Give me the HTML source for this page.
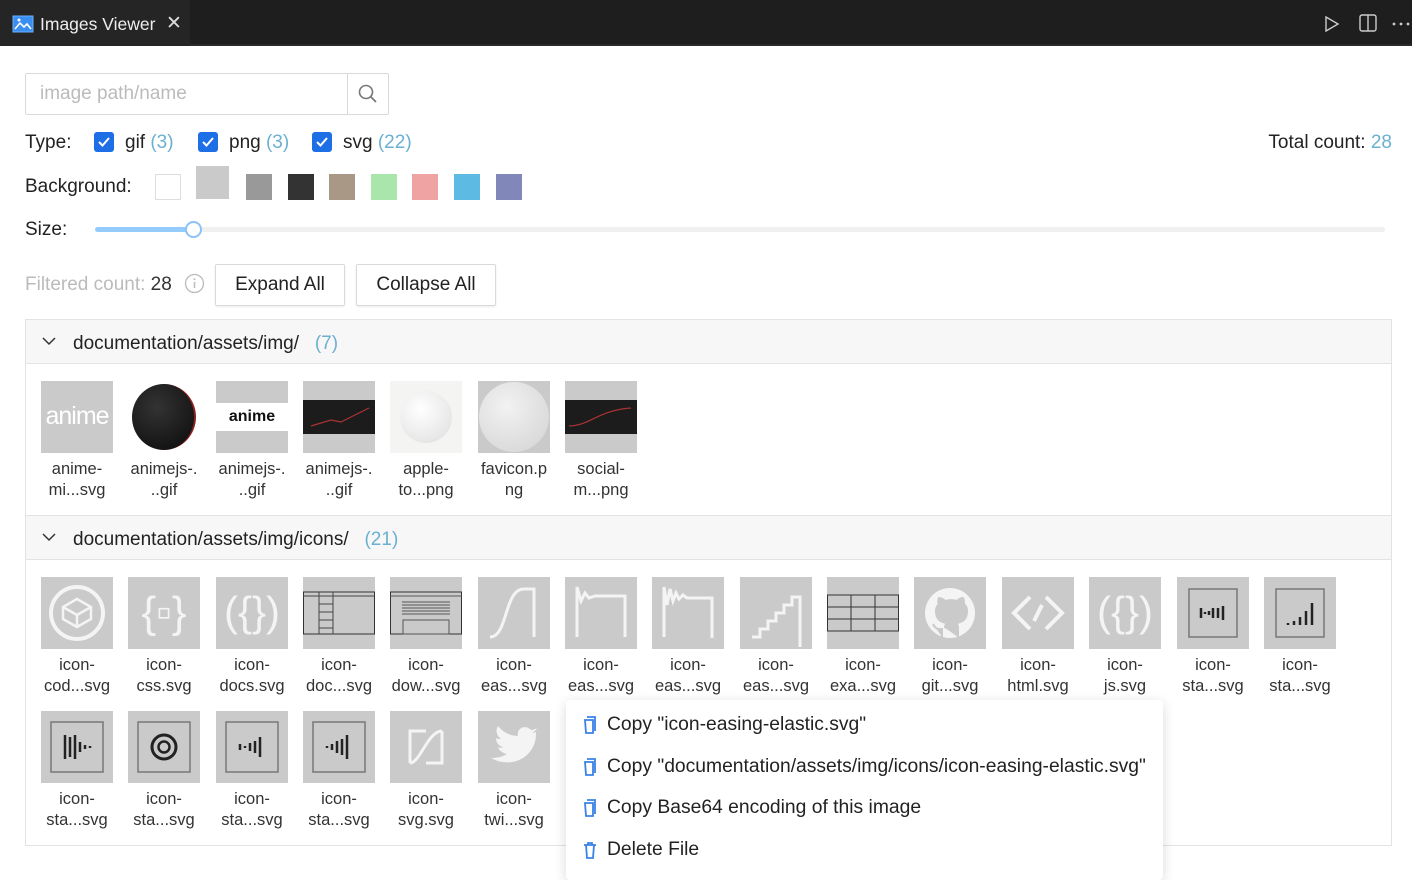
<!DOCTYPE html>
<html><head><meta charset="utf-8"><style>
*{box-sizing:border-box;margin:0;padding:0}
body{width:1412px;height:874px;overflow:hidden;background:#fff;font-family:"Liberation Sans",Arial,sans-serif;color:#333;position:relative;font-size:19px}
.a{position:absolute}
.top{left:0;top:0;width:1412px;height:46px;background:#1e1e1e;border-bottom:2px solid #2a2a2a}
.tab{left:0;top:0;width:190px;height:46px;background:#252526}
.cb{width:20px;height:20px;background:#1e6fe6;border-radius:3px}
.cnt{color:#6bb0d0}
.sw{width:26px;height:26px}
.btn{border:1px solid #d9d9d9;border-radius:2px;height:42px;font-size:19px;color:#222;display:flex;align-items:center;justify-content:center;box-shadow:0 1px 2px rgba(0,0,0,.08)}
.hdr{left:25px;width:1367px;height:45px;background:#f7f7f7;border:1px solid #e3e3e3;font-size:19px;color:#222}
.t{width:72px;height:72px;background:#cacaca}
.l{width:100px;text-align:center;font-size:16.5px;line-height:21px;color:#333}
.mi{left:583px;font-size:19.3px;color:#222;display:flex;align-items:center;gap:10px}
.f{font-size:19px;color:#222}
</style></head><body>
<div class="a top"></div>
<div class="a tab"></div>
<svg class="a" style="left:12px;top:15px" width="22" height="18" viewBox="0 0 22 18"><rect x="1" y="1" width="20" height="16" fill="#3a8ef0" stroke="#6ab0ff"/><path d="M3 14l5-6 4 4 3-3 4 5" stroke="#fff" stroke-width="1.6" fill="none"/><circle cx="7" cy="5" r="1.5" fill="#fff"/></svg>
<div class="a" style="left:40px;top:14px;color:#eee;font-size:17.5px">Images Viewer</div>
<div class="a" style="left:166px;top:12px;color:#ddd;font-size:19px">✕</div>
<svg class="a" style="left:1324px;top:15px" width="16" height="18"><path d="M2 2l12 7-12 7z" stroke="#ccc" stroke-width="1.4" fill="none"/></svg>
<svg class="a" style="left:1359px;top:14px" width="18" height="18"><rect x="1" y="1" width="16" height="16" rx="2" stroke="#ccc" stroke-width="1.4" fill="none"/><path d="M9 1v16" stroke="#ccc" stroke-width="1.4"/></svg>
<svg class="a" style="left:1392px;top:21px" width="18" height="6"><circle cx="2" cy="3" r="1.4" fill="#ccc"/><circle cx="9" cy="3" r="1.4" fill="#ccc"/><circle cx="16" cy="3" r="1.4" fill="#ccc"/></svg>

<div class="a" style="left:25px;top:73px;width:364px;height:42px;border:1px solid #d9d9d9;border-radius:2px"></div>
<div class="a" style="left:347px;top:73px;width:1px;height:42px;background:#d9d9d9"></div>
<div class="a" style="left:40px;top:83px;color:#bbb;font-size:19px">image path/name</div>
<svg class="a" style="left:357px;top:83px" width="22" height="22"><circle cx="9" cy="9" r="6.5" stroke="#777" stroke-width="1.6" fill="none"/><path d="M14 14l5 5" stroke="#777" stroke-width="1.8"/></svg>

<div class="a f" style="left:25px;top:132px">Type:</div>
<div class="a cb" style="left:94px;top:132px"></div><svg class="a" style="left:97px;top:136px" width="14" height="12"><path d="M2 6l3.5 3.5L12 2" stroke="#fff" stroke-width="2" fill="none"/></svg>
<div class="a f" style="left:125px;top:132px">gif <span class="cnt">(3)</span></div>
<div class="a cb" style="left:198px;top:132px"></div><svg class="a" style="left:201px;top:136px" width="14" height="12"><path d="M2 6l3.5 3.5L12 2" stroke="#fff" stroke-width="2" fill="none"/></svg>
<div class="a f" style="left:229px;top:132px">png <span class="cnt">(3)</span></div>
<div class="a cb" style="left:312px;top:132px"></div><svg class="a" style="left:315px;top:136px" width="14" height="12"><path d="M2 6l3.5 3.5L12 2" stroke="#fff" stroke-width="2" fill="none"/></svg>
<div class="a f" style="left:343px;top:132px">svg <span class="cnt">(22)</span></div>
<div class="a f" style="right:20px;top:132px">Total count: <span class="cnt">28</span></div>

<div class="a f" style="left:25px;top:176px">Background:</div>
<div class="a sw" style="left:155px;top:174px;border:1px solid #ddd;background:#fff"></div>
<div class="a" style="left:196px;top:166px;width:33px;height:33px;background:#cacaca"></div>
<div class="a sw" style="left:246px;top:174px;background:#999"></div>
<div class="a sw" style="left:288px;top:174px;background:#333"></div>
<div class="a sw" style="left:329px;top:174px;background:#a89885"></div>
<div class="a sw" style="left:371px;top:174px;background:#a8e6ac"></div>
<div class="a sw" style="left:412px;top:174px;background:#f0a3a3"></div>
<div class="a sw" style="left:454px;top:174px;background:#5dbbe3"></div>
<div class="a sw" style="left:496px;top:174px;background:#8187b8"></div>

<div class="a f" style="left:25px;top:219px">Size:</div>
<div class="a" style="left:95px;top:227px;width:1290px;height:5px;background:#f0f0f0;border-radius:3px"></div>
<div class="a" style="left:95px;top:227px;width:100px;height:5px;background:#95ccff;border-radius:3px"></div>
<div class="a" style="left:185px;top:221px;width:17px;height:17px;border:2px solid #8cc3f7;border-radius:50%;background:#fff"></div>

<div class="a" style="left:25px;top:274px;font-size:19px;color:#bbb">Filtered count: <span style="color:#333">28</span></div>
<svg class="a" style="left:184px;top:273px" width="21" height="21"><circle cx="10.5" cy="10.5" r="9" stroke="#bbb" stroke-width="1.3" fill="none"/><path d="M10.5 9v6" stroke="#bbb" stroke-width="1.5"/><circle cx="10.5" cy="6.3" r="1" fill="#bbb"/></svg>
<div class="a btn" style="left:215px;top:264px;width:130px">Expand All</div>
<div class="a btn" style="left:356px;top:264px;width:140px">Collapse All</div>

<div class="a" style="left:25px;top:319px;width:1367px;height:527px;border:1px solid #e3e3e3"></div>
<div class="a hdr" style="top:319px"></div>
<svg class="a" style="left:42px;top:337px" width="14" height="9"><path d="M1 1l6 6 6-6" stroke="#333" stroke-width="1.5" fill="none"/></svg>
<div class="a f" style="left:73px;top:333px">documentation/assets/img/ &nbsp; <span class="cnt">(7)</span></div>
<div class="a hdr" style="top:515px"></div>
<svg class="a" style="left:42px;top:533px" width="14" height="9"><path d="M1 1l6 6 6-6" stroke="#333" stroke-width="1.5" fill="none"/></svg>
<div class="a f" style="left:73px;top:529px">documentation/assets/img/icons/ &nbsp; <span class="cnt">(21)</span></div>

<!-- group 1 -->
<div class="a t" style="left:41px;top:381px"><div style="color:#fff;font-size:25px;text-align:center;margin-top:21px;letter-spacing:-1px">anime</div></div>
<div class="a t" style="left:128px;top:381px;background:#fff"><div style="margin:3px 0 0 4px;width:64px;height:66px;border-radius:50%;background:radial-gradient(circle at 40% 35%,#333,#0a0a0a);border-right:2px solid #8a2020"></div></div>
<div class="a t" style="left:216px;top:381px"><div style="margin-top:22px;height:28px;background:#fff;font-size:16px;font-weight:bold;text-align:center;line-height:28px;color:#111">anime</div></div>
<div class="a t" style="left:303px;top:381px"><div style="margin-top:19px;height:34px;background:#1c1c1c"><svg width="72" height="34"><path d="M8 26l20-6 10 2 28-14" stroke="#a33" stroke-width="1.2" fill="none"/></svg></div></div>
<div class="a t" style="left:390px;top:381px;background:#f4f4f2"><div style="margin:10px 0 0 10px;width:52px;height:52px;border-radius:50%;background:radial-gradient(circle at 40% 35%,#fff,#ddd)"></div></div>
<div class="a t" style="left:478px;top:381px"><div style="margin:1px 0 0 1px;width:70px;height:70px;border-radius:50%;background:radial-gradient(circle at 40% 35%,#f2f2f2,#d2d2d2)"></div></div>
<div class="a t" style="left:565px;top:381px"><div style="margin-top:19px;height:34px;background:#1c1c1c"><svg width="72" height="34"><path d="M4 26c20 0 30-16 62-18" stroke="#a33" stroke-width="1.2" fill="none"/></svg></div></div>

<div class="a l" style="left:27px;top:459px">anime-<br>mi...svg</div>
<div class="a l" style="left:114px;top:459px">animejs-.<br>..gif</div>
<div class="a l" style="left:202px;top:459px">animejs-.<br>..gif</div>
<div class="a l" style="left:289px;top:459px">animejs-.<br>..gif</div>
<div class="a l" style="left:376px;top:459px">apple-<br>to...png</div>
<div class="a l" style="left:464px;top:459px">favicon.p<br>ng</div>
<div class="a l" style="left:551px;top:459px">social-<br>m...png</div>

<!-- group 2 row 1 -->
<div class="a t" style="left:41px;top:577px"><svg width="72" height="72"><circle cx="36" cy="36" r="26" stroke="#f4f4f4" stroke-width="4" fill="none"/><path d="M36 22l14 8v12l-14 8-14-8V30z M22 30l14 8 14-8 M36 38v12" stroke="#f4f4f4" stroke-width="2.5" fill="none"/></svg></div>
<div class="a t" style="left:128px;top:577px"><div style="color:#f4f4f4;font-size:44px;text-align:center;line-height:72px">{▫}</div></div>
<div class="a t" style="left:216px;top:577px"><div style="color:#f4f4f4;font-size:42px;text-align:center;line-height:70px">({})</div></div>
<div class="a t" style="left:303px;top:577px"><svg width="72" height="72"><rect x="0.5" y="15" width="71" height="42" stroke="#333" fill="none"/><path d="M0 19h72M16 15v42M30 15v42M16 27h14M16 35h14M16 43h14M16 51h14" stroke="#444" fill="none"/></svg></div>
<div class="a t" style="left:390px;top:577px"><svg width="72" height="72"><rect x="0.5" y="15" width="71" height="42" stroke="#333" fill="none"/><path d="M0 19h72M12 25h48M12 28h48M12 31h48M12 34h48M12 37h48" stroke="#555"/><rect x="13" y="43" width="46" height="14" stroke="#555" fill="none"/></svg></div>
<div class="a t" style="left:478px;top:577px"><svg width="72" height="72"><path d="M12 60c18 0 14-48 34-48h10v48" stroke="#f4f4f4" stroke-width="3" fill="none"/></svg></div>
<div class="a t" style="left:565px;top:577px"><svg width="72" height="72"><path d="M12 60V10l4 14 4-8 4 5 6-2h30v41" stroke="#f4f4f4" stroke-width="3" fill="none"/></svg></div>
<div class="a t" style="left:652px;top:577px"><svg width="72" height="72"><path d="M12 60V10l3 18 3-16 3 12 3-8 3 6 4-4 4 3 25 0v40" stroke="#f4f4f4" stroke-width="3" fill="none"/></svg></div>
<div class="a t" style="left:740px;top:577px"><svg width="72" height="72"><path d="M12 60h8v-8h8v-8h8v-8h8v-8h8v-8h8v50" stroke="#f4f4f4" stroke-width="3" fill="none"/></svg></div>
<div class="a t" style="left:827px;top:577px"><svg width="72" height="72"><rect x="0.5" y="18" width="71" height="36" stroke="#333" fill="none"/><path d="M0 30h72M0 42h72M24 18v36M48 18v36" stroke="#333"/></svg></div>
<div class="a t" style="left:914px;top:577px"><svg width="72" height="72"><circle cx="36" cy="36" r="25" fill="#f4f4f4"/><path d="M28 60v-8c-6 1-8-3-9-5M44 60v-9c0-3-1-4-2-5 7-1 11-4 11-12 0-3-1-5-3-7 0-2 0-4-1-6-2 0-4 1-6 3-3-1-8-1-12 0-2-2-4-3-6-3-1 2-1 4 0 6-2 2-3 4-3 7 0 8 4 11 11 12-1 1-2 3-2 5" stroke="#cacaca" stroke-width="2" fill="#cacaca"/></svg></div>
<div class="a t" style="left:1002px;top:577px"><svg width="72" height="72"><path d="M28 20L12 36l16 16M44 20l16 16-16 16M40 28l-8 16" stroke="#f4f4f4" stroke-width="4" fill="none"/></svg></div>
<div class="a t" style="left:1089px;top:577px"><div style="color:#f4f4f4;font-size:42px;text-align:center;line-height:70px">({})</div></div>
<div class="a t" style="left:1177px;top:577px"><svg width="72" height="72"><rect x="12" y="12" width="48" height="48" stroke="#777" stroke-width="1.5" fill="none"/><path d="M24 31v10M28 35v2M32 34v4M36 31v10M41 31v10M46 29v14" stroke="#222" stroke-width="2.5"/></svg></div>
<div class="a t" style="left:1264px;top:577px"><svg width="72" height="72"><rect x="12" y="12" width="48" height="48" stroke="#777" stroke-width="1.5" fill="none"/><path d="M24 46v2M30 44v4M36 40v8M42 34v14M48 26v22" stroke="#222" stroke-width="2.5"/></svg></div>

<div class="a l" style="left:27px;top:655px">icon-<br>cod...svg</div>
<div class="a l" style="left:114px;top:655px">icon-<br>css.svg</div>
<div class="a l" style="left:202px;top:655px">icon-<br>docs.svg</div>
<div class="a l" style="left:289px;top:655px">icon-<br>doc...svg</div>
<div class="a l" style="left:376px;top:655px">icon-<br>dow...svg</div>
<div class="a l" style="left:464px;top:655px">icon-<br>eas...svg</div>
<div class="a l" style="left:551px;top:655px">icon-<br>eas...svg</div>
<div class="a l" style="left:638px;top:655px">icon-<br>eas...svg</div>
<div class="a l" style="left:726px;top:655px">icon-<br>eas...svg</div>
<div class="a l" style="left:813px;top:655px">icon-<br>exa...svg</div>
<div class="a l" style="left:900px;top:655px">icon-<br>git...svg</div>
<div class="a l" style="left:988px;top:655px">icon-<br>html.svg</div>
<div class="a l" style="left:1075px;top:655px">icon-<br>js.svg</div>
<div class="a l" style="left:1163px;top:655px">icon-<br>sta...svg</div>
<div class="a l" style="left:1250px;top:655px">icon-<br>sta...svg</div>

<!-- row 2 -->
<div class="a t" style="left:41px;top:711px"><svg width="72" height="72"><rect x="10" y="11" width="52" height="50" stroke="#777" stroke-width="1.5" fill="none"/><path d="M24 24v24M29 26v20M34 24v24M39 31v10M44 34v4M49 35v2" stroke="#222" stroke-width="2.5"/></svg></div>
<div class="a t" style="left:128px;top:711px"><svg width="72" height="72"><rect x="10" y="11" width="52" height="50" stroke="#777" stroke-width="1.5" fill="none"/><circle cx="36" cy="36" r="12" stroke="#222" stroke-width="3" fill="none"/><circle cx="36" cy="36" r="5.5" stroke="#222" stroke-width="2.5" fill="none"/></svg></div>
<div class="a t" style="left:216px;top:711px"><svg width="72" height="72"><rect x="10" y="11" width="52" height="50" stroke="#777" stroke-width="1.5" fill="none"/><path d="M24 33v6M29 35v2M34 32v8M39 30v12M44 26v20" stroke="#222" stroke-width="2.5"/></svg></div>
<div class="a t" style="left:303px;top:711px"><svg width="72" height="72"><rect x="10" y="11" width="52" height="50" stroke="#777" stroke-width="1.5" fill="none"/><path d="M24 35v2M29 33v6M34 30v12M39 28v16M44 24v24" stroke="#222" stroke-width="2.5"/></svg></div>
<div class="a t" style="left:390px;top:711px"><svg width="72" height="72"><path d="M20 52V20h16M52 20v32H36M20 52c10 0 18-32 32-32" stroke="#f4f4f4" stroke-width="3" fill="none"/></svg></div>
<div class="a t" style="left:478px;top:711px"><svg width="72" height="72"><path d="M60 20c-2 1-4 2-6 2 2-1 4-3 5-5-2 1-4 2-6 2-5-6-15-2-13 6-8 0-15-4-20-10-3 5-1 10 3 13-2 0-3 0-5-1 0 5 3 8 7 9-2 1-3 1-5 0 1 4 5 6 9 7-5 3-10 4-16 4 22 12 46-2 45-26 2-1 4-3 5-4z" fill="#f4f4f4"/></svg></div>

<div class="a l" style="left:27px;top:789px">icon-<br>sta...svg</div>
<div class="a l" style="left:114px;top:789px">icon-<br>sta...svg</div>
<div class="a l" style="left:202px;top:789px">icon-<br>sta...svg</div>
<div class="a l" style="left:289px;top:789px">icon-<br>sta...svg</div>
<div class="a l" style="left:376px;top:789px">icon-<br>svg.svg</div>
<div class="a l" style="left:464px;top:789px">icon-<br>twi...svg</div>

<!-- context menu -->
<div class="a" style="left:566px;top:700px;width:597px;height:180px;background:#fff;border-radius:4px;box-shadow:0 3px 12px rgba(0,0,0,.15)"></div>
<div class="a mi" style="top:714px"><svg width="14" height="18"><path d="M4 1h8v14M2 4h8v13H3z" stroke="#3b82e6" stroke-width="1.8" fill="none"/></svg>Copy "icon-easing-elastic.svg"</div>
<div class="a mi" style="top:756px"><svg width="14" height="18"><path d="M4 1h8v14M2 4h8v13H3z" stroke="#3b82e6" stroke-width="1.8" fill="none"/></svg>Copy "documentation/assets/img/icons/icon-easing-elastic.svg"</div>
<div class="a mi" style="top:797px"><svg width="14" height="18"><path d="M4 1h8v14M2 4h8v13H3z" stroke="#3b82e6" stroke-width="1.8" fill="none"/></svg>Copy Base64 encoding of this image</div>
<div class="a mi" style="top:839px"><svg width="14" height="18"><path d="M1 4h12M5 4V2h4v2M3 4l1 13h6l1-13" stroke="#3b82e6" stroke-width="1.8" fill="none"/></svg>Delete File</div>
</body></html>
